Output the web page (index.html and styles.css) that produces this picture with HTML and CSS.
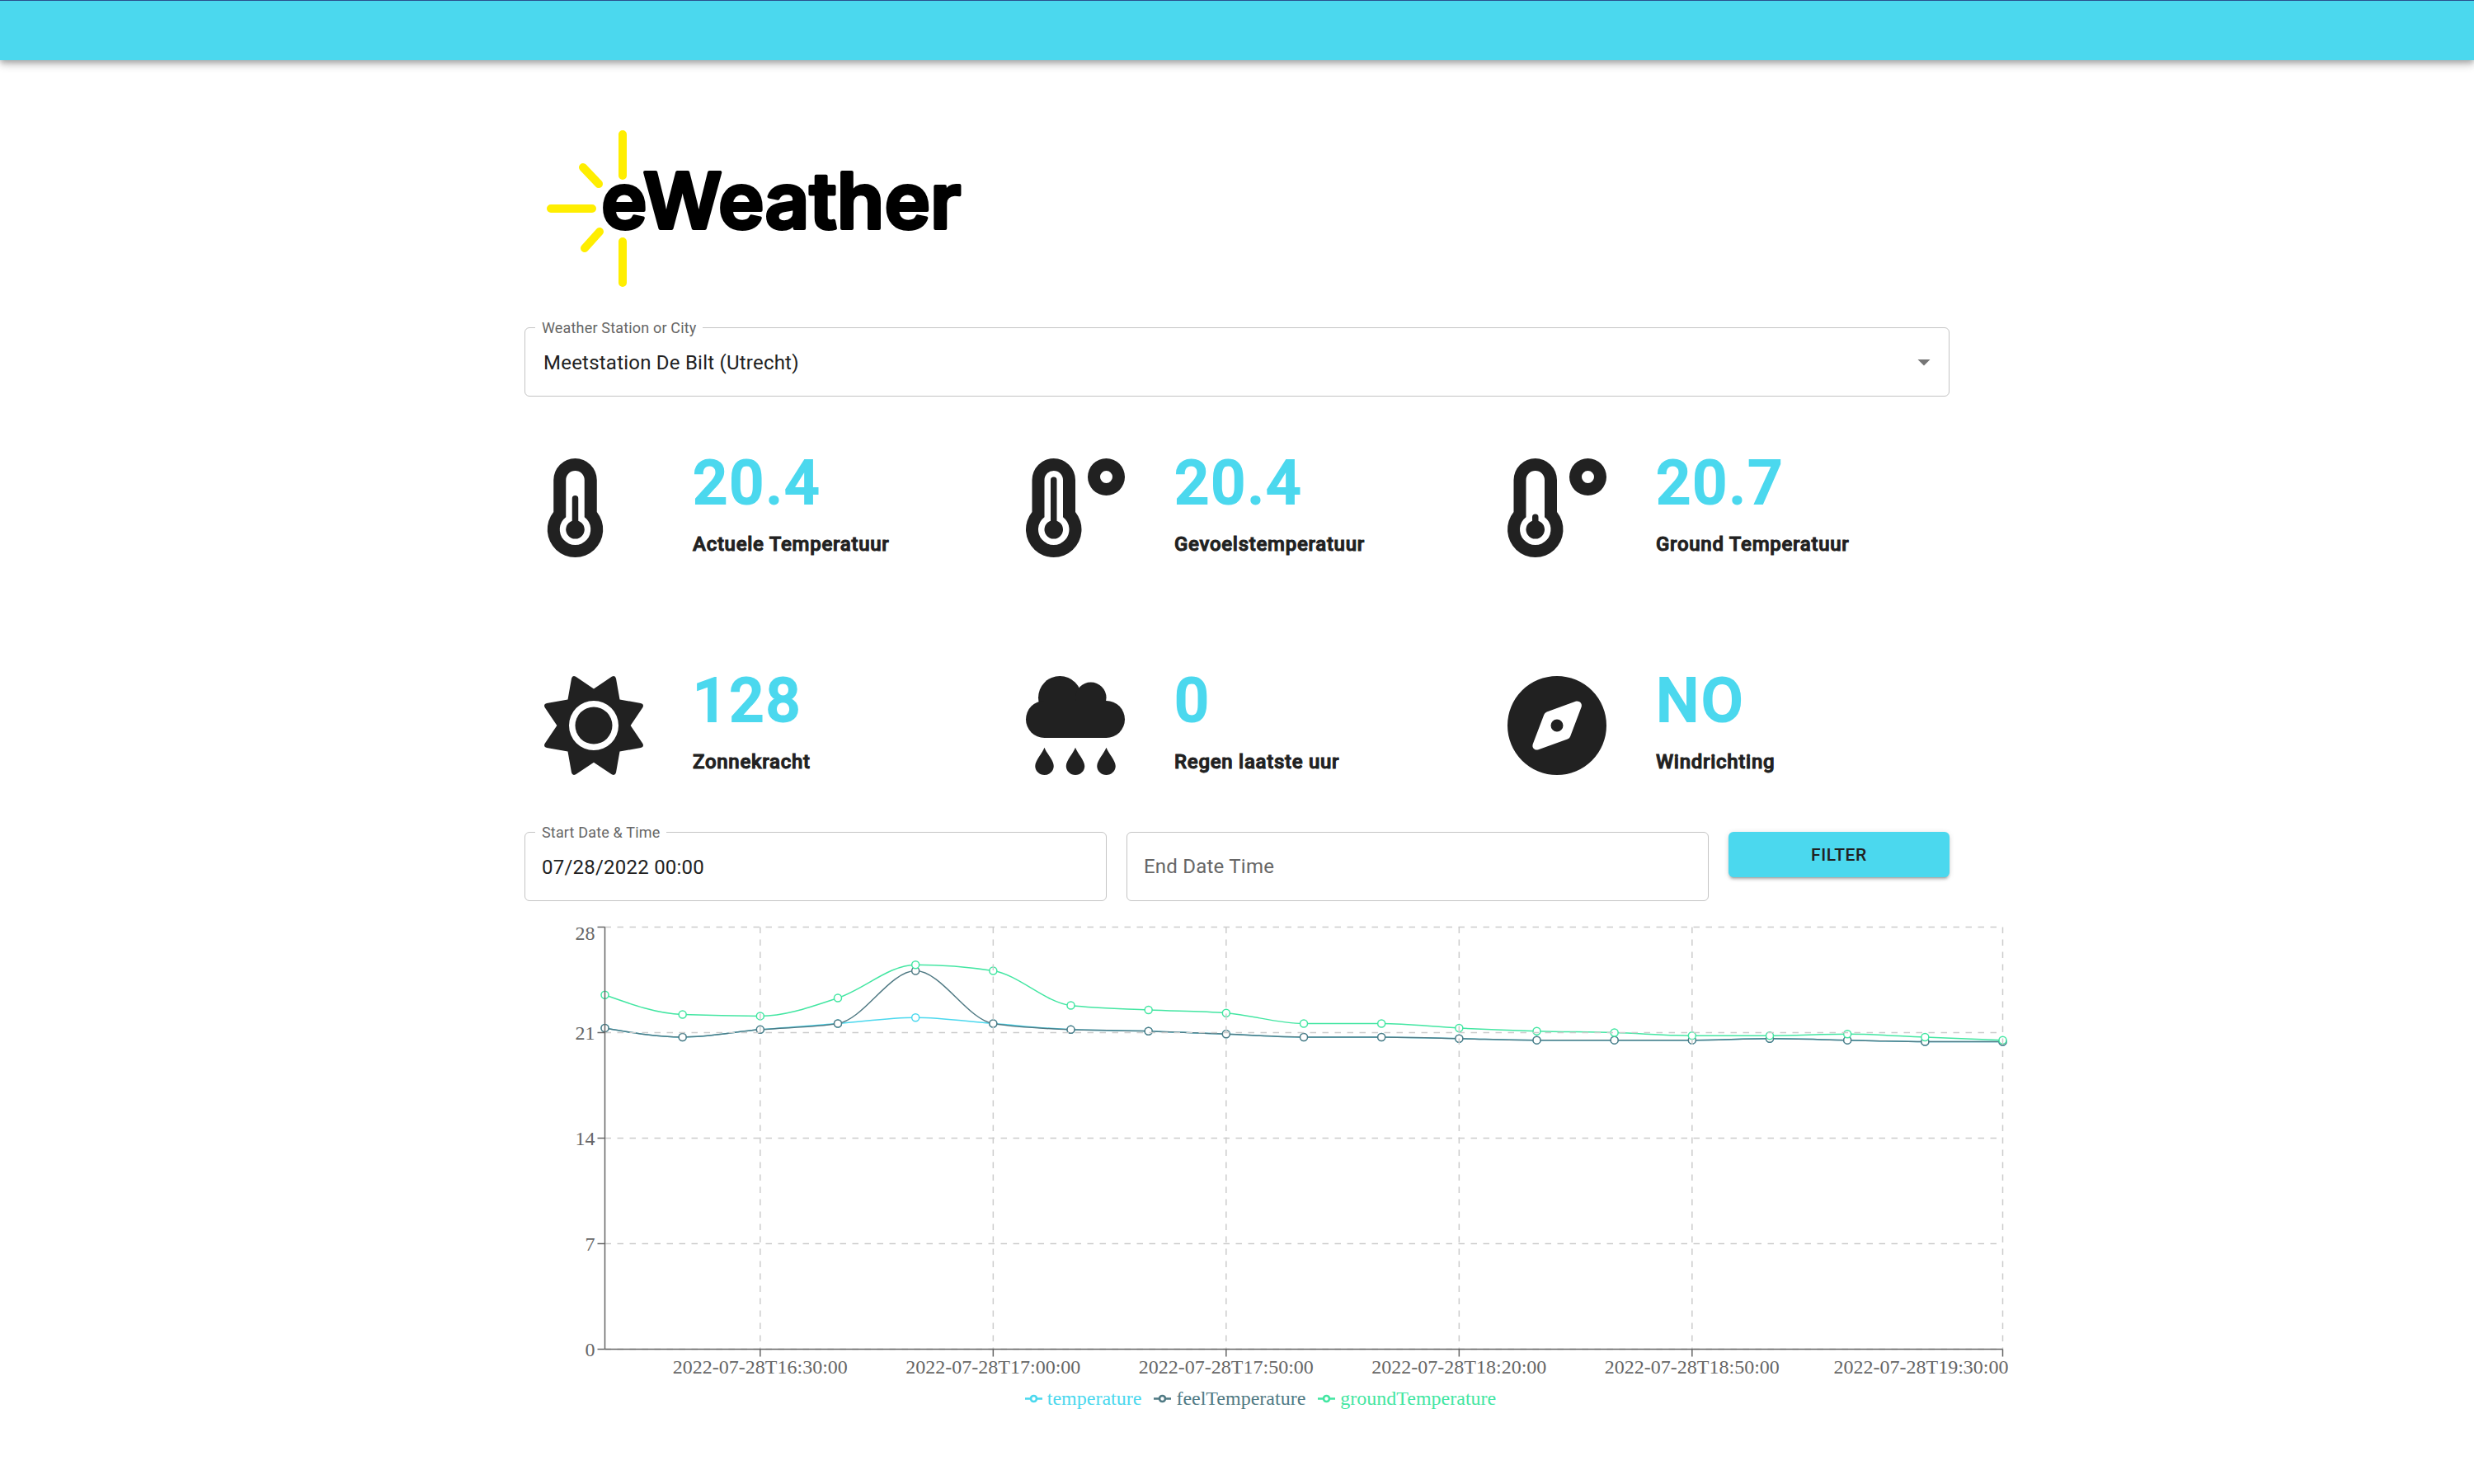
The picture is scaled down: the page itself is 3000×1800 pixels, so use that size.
FILE: index.html
```html
<!DOCTYPE html>
<html lang="nl">
<head>
<meta charset="utf-8">
<meta name="viewport" content="width=device-width, initial-scale=1">
<title>eWeather</title>
<link rel="stylesheet" href="styles.css">
</head>
<body>
<header class="app-bar"></header>
<main class="container">
  <h1 class="brand">
    <svg class="logo" viewBox="0 0 560 200" role="img" aria-label="eWeather">
      <g class="logo-rays">
        <path d="M119 13V63M119 143V193M32 103H82M71 53L90 73M73 151L91 131"/>
      </g>
      <text class="logo-text" x="93" y="127">eWeather</text>
    </svg>
  </h1>

  <div class="field">
    <label class="field-label" for="station">Weather Station or City</label>
    <select class="field-control field-select" id="station">
      <option>Meetstation De Bilt (Utrecht)</option>
    </select>
    <svg class="field-arrow" viewBox="0 0 24 24" aria-hidden="true"><path d="M7 10l5 5 5-5z"/></svg>
  </div>

  <section class="stats">
    <article class="stat">
      <svg class="stat-icon" viewBox="-1 0 32 32" aria-hidden="true">
        <path fill-rule="evenodd" d="M2 17.34V7a7 7 0 0 1 14 0v10.34A9 9 0 1 1 2 17.34zM6 19V7a3 3 0 0 1 6 0v12a5 5 0 1 1-6 0z"/>
        <path d="M8 20.2V13a1 1 0 0 1 2 0v7.2a3 3 0 1 1-2 0z"/>
      </svg>
      <div class="stat-body"><p class="stat-value">20.4</p><h2 class="stat-name">Actuele Temperatuur</h2></div>
    </article>
    <article class="stat">
      <svg class="stat-icon" viewBox="0 0 32 32" aria-hidden="true">
        <path fill-rule="evenodd" d="M2 17.34V7a7 7 0 0 1 14 0v10.34A9 9 0 1 1 2 17.34zM6 19V7a3 3 0 0 1 6 0v12a5 5 0 1 1-6 0z"/>
        <path d="M8 20.2V7a1 1 0 0 1 2 0v13.2a3 3 0 1 1-2 0z"/>
        <path fill-rule="evenodd" d="M26 0a6 6 0 1 1 0 12a6 6 0 1 1 0-12zM26 4a2 2 0 1 0 0 4a2 2 0 1 0 0-4z"/>
      </svg>
      <div class="stat-body"><p class="stat-value">20.4</p><h2 class="stat-name">Gevoelstemperatuur</h2></div>
    </article>
    <article class="stat">
      <svg class="stat-icon" viewBox="0 0 32 32" aria-hidden="true">
        <path fill-rule="evenodd" d="M2 17.34V7a7 7 0 0 1 14 0v10.34A9 9 0 1 1 2 17.34zM6 19V7a3 3 0 0 1 6 0v12a5 5 0 1 1-6 0z"/>
        <path d="M8 20.2V19a1 1 0 0 1 2 0v1.2a3 3 0 1 1-2 0z"/>
        <path fill-rule="evenodd" d="M26 0a6 6 0 1 1 0 12a6 6 0 1 1 0-12zM26 4a2 2 0 1 0 0 4a2 2 0 1 0 0-4z"/>
      </svg>
      <div class="stat-body"><p class="stat-value">20.7</p><h2 class="stat-name">Ground Temperatuur</h2></div>
    </article>
    <article class="stat">
      <svg class="stat-icon" viewBox="0 0 32 32" aria-hidden="true">
        <path fill-rule="evenodd" d="M16 4.1L21.8.2Q22.9-.4 23.2.8L24.4 7.6L31.2 8.8Q32.4 9.1 31.8 10.2L27.9 16L31.8 21.8Q32.4 22.9 31.2 23.2L24.4 24.4L23.2 31.2Q22.9 32.4 21.8 31.8L16 27.9L10.2 31.8Q9.1 32.4 8.8 31.2L7.6 24.4L.8 23.2Q-.4 22.9 .2 21.8L4.1 16L.2 10.2Q-.4 9.1 .8 8.8L7.6 7.6L8.8 .8Q9.1-.4 10.2 .2zM16 8a8 8 0 1 0 0 16a8 8 0 1 0 0-16z"/>
        <circle cx="16" cy="16" r="6"/>
      </svg>
      <div class="stat-body"><p class="stat-value">128</p><h2 class="stat-name">Zonnekracht</h2></div>
    </article>
    <article class="stat">
      <svg class="stat-icon" viewBox="0 0 32 32" aria-hidden="true">
        <circle cx="11" cy="7" r="7"/>
        <circle cx="21" cy="7" r="5"/>
        <path d="M6 8H26A6 6 0 0 1 26 20H6A6 6 0 0 1 6 8z"/>
        <path d="M6 23.1C6.6 24.9 9 27.2 9 29.1a3 2.9 0 0 1-6 0C3 27.2 5.4 24.9 6 23.1zM16 23.1C16.6 24.9 19 27.2 19 29.1a3 2.9 0 0 1-6 0C13 27.2 15.4 24.9 16 23.1zM26 23.1C26.6 24.9 29 27.2 29 29.1a3 2.9 0 0 1-6 0C23 27.2 25.4 24.9 26 23.1z"/>
      </svg>
      <div class="stat-body"><p class="stat-value">0</p><h2 class="stat-name">Regen laatste uur</h2></div>
    </article>
    <article class="stat">
      <svg class="stat-icon" viewBox="0 0 32 32" aria-hidden="true">
        <path fill-rule="evenodd" d="M16 0a16 16 0 1 1 0 32a16 16 0 1 1 0-32zM22 8.2L12.7 11.6Q12 11.9 11.8 12.5L8.2 22C7.8 23.2 8.8 24.2 10 23.8L19.4 20.4Q20.1 20.1 20.3 19.5L23.9 10C24.3 8.8 23.2 7.8 22 8.2zM16 14a2 2 0 1 1 0 4a2 2 0 1 1 0-4z"/>
      </svg>
      <div class="stat-body"><p class="stat-value">NO</p><h2 class="stat-name">Windrichting</h2></div>
    </article>
  </section>

  <form class="filters">
    <div class="field">
      <label class="field-label" for="start">Start Date &amp; Time</label>
      <input class="field-control" id="start" type="text" value="07/28/2022 00:00">
    </div>
    <div class="field">
      <label class="field-label field-label-resting" for="end">End Date Time</label>
      <input class="field-control" id="end" type="text">
    </div>
    <button class="filter-button" type="button">FILTER</button>
  </form>

  <figure class="chart">
    <svg class="chart-plot" id="plot" viewBox="0 0 1200 376" role="img" aria-label="Temperature by time"></svg>
    <ul class="legend">
      <li class="legend-item series-temperature"><svg class="legend-mark" viewBox="0 0 32 32" aria-hidden="true"><path d="M0 16H10.667A5.333 5.333 0 1 1 21.333 16H32M21.333 16A5.333 5.333 0 1 1 10.667 16"/></svg>temperature</li>
      <li class="legend-item series-feel"><svg class="legend-mark" viewBox="0 0 32 32" aria-hidden="true"><path d="M0 16H10.667A5.333 5.333 0 1 1 21.333 16H32M21.333 16A5.333 5.333 0 1 1 10.667 16"/></svg>feelTemperature</li>
      <li class="legend-item series-ground"><svg class="legend-mark" viewBox="0 0 32 32" aria-hidden="true"><path d="M0 16H10.667A5.333 5.333 0 1 1 21.333 16H32M21.333 16A5.333 5.333 0 1 1 10.667 16"/></svg>groundTemperature</li>
    </ul>
  </figure>
</main>
<script src="chart.js"></script>
</body>
</html>
```
FILE: styles.css
```css
:root {
  --accent: #4bd8ee;
  --ink: #212121;
  --muted: #666;
  --line: #c4c4c4;
}

* { box-sizing: border-box; }

body {
  margin: 0;
  background: #fff;
  color: var(--ink);
  font-family: Roboto, "Liberation Sans", sans-serif;
  font-size: 24px;
  line-height: 36px;
}

.app-bar {
  height: 73px;
  background: var(--accent);
  border-top: 1px solid #2a4f8c;
  box-shadow: 0 3px 6px -1px rgba(0, 0, 0, .2), 0 6px 8px rgba(0, 0, 0, .14), 0 2px 15px rgba(0, 0, 0, .12);
}

.container {
  max-width: 1800px;
  margin: 0 auto;
  padding: 77px 36px 72px;
}

/* Logo */
.brand { margin: 0 0 47px; line-height: 0; }
.logo { width: 560px; max-width: 100%; height: auto; overflow: visible; }
.logo-rays { fill: none; stroke: #fe0; stroke-width: 10; stroke-linecap: round; }
.logo-text {
  font: 600 94px Inter, "Open Sans", sans-serif;
  fill: #000;
  stroke: #000;
  stroke-width: 4px;
  stroke-linejoin: round;
}

/* Outlined fields */
.field { position: relative; }
.field-control {
  display: block;
  width: 100%;
  height: 84px;
  margin: 0;
  padding: 2px 20px 0;
  border: 1px solid var(--line);
  border-radius: 6px;
  background: #fff;
  color: var(--ink);
  font: inherit;
  letter-spacing: .00938em;
}
.field-select { appearance: none; padding-left: 22px; }
.field-label {
  position: absolute;
  top: -11px;
  left: 13px;
  padding: 0 8px;
  background: #fff;
  color: var(--muted);
  font-size: 18px;
  line-height: 24px;
  letter-spacing: .00938em;
}
.field-label-resting {
  top: 24px;
  font-size: 24px;
  line-height: 36px;
}
.field-arrow {
  position: absolute;
  top: 24px;
  right: 13px;
  width: 36px;
  height: 36px;
  fill: #757575;
  pointer-events: none;
}

/* Current readings */
.stats {
  display: grid;
  grid-template-columns: repeat(3, 1fr);
  gap: 128px 24px;
  margin: 61px 0 67px;
}
.stat { display: flex; gap: 60px; padding-left: 24px; }
.stat-icon { flex: none; width: 120px; height: 120px; margin-top: 14px; fill: var(--ink); overflow: visible; }
.stat-body { display: flex; flex-direction: column; gap: 12px; }
.stat-value {
  margin: 0;
  color: var(--accent);
  font-size: 74px;
  font-weight: 500;
  line-height: 88px;
  letter-spacing: .03em;
  -webkit-text-stroke: 2px currentColor;
}
.stat-name {
  margin: 0;
  font-size: 24px;
  font-weight: 500;
  line-height: 36px;
  letter-spacing: .03em;
  -webkit-text-stroke: 1px currentColor;
}

/* Period filter */
.filters {
  display: grid;
  grid-template-columns: repeat(12, 1fr);
  gap: 24px;
  align-items: start;
}
.filters .field { grid-column: span 5; }
.filter-button {
  grid-column: span 2;
  height: 55px;
  padding: 0 24px;
  border: 0;
  border-radius: 6px;
  background: var(--accent);
  box-shadow: 0 4px 2px -3px rgba(0, 0, 0, .2), 0 3px 3px rgba(0, 0, 0, .14), 0 1px 7px rgba(0, 0, 0, .12);
  color: var(--ink);
  font: 500 21px/36px Roboto, "Liberation Sans", sans-serif;
  letter-spacing: .02857em;
}

/* Chart */
.chart { margin: 24px -72px 0 0; font-family: "Liberation Serif", serif; }
.chart-plot { display: block; width: 100%; height: auto; overflow: visible; }
.chart-grid { stroke: #ccc; stroke-dasharray: 5 5; }
.chart-axis { stroke: var(--muted); }
.chart-tick { fill: var(--muted); font-size: 16px; }
.chart-line { fill: none; stroke: currentColor; }
.chart-dot { fill: #fff; stroke: currentColor; }
.series-temperature { color: #4bd8ee; }
.series-feel { color: #507a84; }
.series-ground { color: #43e6a2; }
.legend {
  display: flex;
  justify-content: center;
  margin: 0;
  padding: 1px 0 0;
  line-height: 28px;
  list-style: none;
}
.legend-item { display: flex; align-items: center; gap: 6px; margin-right: 15px; }
.legend-mark { width: 21px; height: 21px; fill: none; stroke: currentColor; stroke-width: 4; }
```
FILE: chart.js
```js
const feel = [21.3, 20.7, 21.2, 21.6, 25.1, 21.6, 21.2, 21.1, 20.9, 20.7, 20.7, 20.6, 20.5, 20.5, 20.5, 20.6, 20.5, 20.4, 20.4];
const temperature = feel.map((v, i) => (i === 4 ? 22 : v));
const ground = [23.5, 22.2, 22.1, 23.3, 25.5, 25.1, 22.8, 22.5, 22.3, 21.6, 21.6, 21.3, 21.1, 21.0, 20.8, 20.8, 20.9, 20.7, 20.5];
const times = { 2: '16:30', 5: '17:00', 8: '17:50', 11: '18:20', 14: '18:50', 18: '19:30' };

const left = 65, right = 1195, top_ = 5, bottom = 346.333;
const x = i => left + (right - left) * i / 18;
const y = v => bottom - (bottom - top_) * v / 28;

// Cubic path whose tangents never overshoot the data
function curve(values) {
  const p = values.map((v, i) => [x(i), y(v)]);
  const n = p.length, h = x(1) - x(0);
  const s = p.slice(1).map((q, i) => (q[1] - p[i][1]) / h);
  const t = p.map((_, i) => {
    if (i === 0 || i === n - 1) return 0;
    const a = s[i - 1], b = s[i];
    return (Math.sign(a) + Math.sign(b)) * Math.min(Math.abs(a), Math.abs(b), Math.abs(a + b) / 4) || 0;
  });
  t[0] = (3 * s[0] - t[1]) / 2;
  t[n - 1] = (3 * s[n - 2] - t[n - 2]) / 2;
  let d = `M${p[0]}`;
  for (let i = 1; i < n; i++) {
    const [x0, y0] = p[i - 1], [x1, y1] = p[i];
    d += `C${x0 + h / 3},${y0 + t[i - 1] * h / 3},${x1 - h / 3},${y1 - t[i] * h / 3},${x1},${y1}`;
  }
  return d;
}

const line = (cls, x1, y1, x2, y2) => `<line class="${cls}" x1="${x1}" y1="${y1}" x2="${x2}" y2="${y2}"/>`;
const series = (name, values) => `<g class="series-${name}"><path class="chart-line" d="${curve(values)}"/>` +
  values.map((v, i) => `<circle class="chart-dot" cx="${x(i)}" cy="${y(v)}" r="3"/>`).join('') + '</g>';

let out = series('temperature', temperature) + series('feel', feel) + series('ground', ground);
for (const v of [0, 7, 14, 21, 28]) {
  out += line('chart-grid', left, y(v), right, y(v)) + line('chart-axis', left - 6, y(v), left, y(v));
  out += `<text class="chart-tick" x="${left - 8}" y="${Math.max(y(v), 9) + 6}" text-anchor="end">${v}</text>`;
}
for (const [i, time] of Object.entries(times)) {
  out += line('chart-grid', x(i), top_, x(i), bottom) + line('chart-axis', x(i), bottom, x(i), bottom + 6);
  out += `<text class="chart-tick" x="${Math.min(x(i), 1129)}" y="366" text-anchor="middle">2022-07-28T${time}:00</text>`;
}
out += line('chart-axis', left, top_, left, bottom) + line('chart-axis', left, bottom, right, bottom);
document.getElementById('plot').innerHTML = out;
```
